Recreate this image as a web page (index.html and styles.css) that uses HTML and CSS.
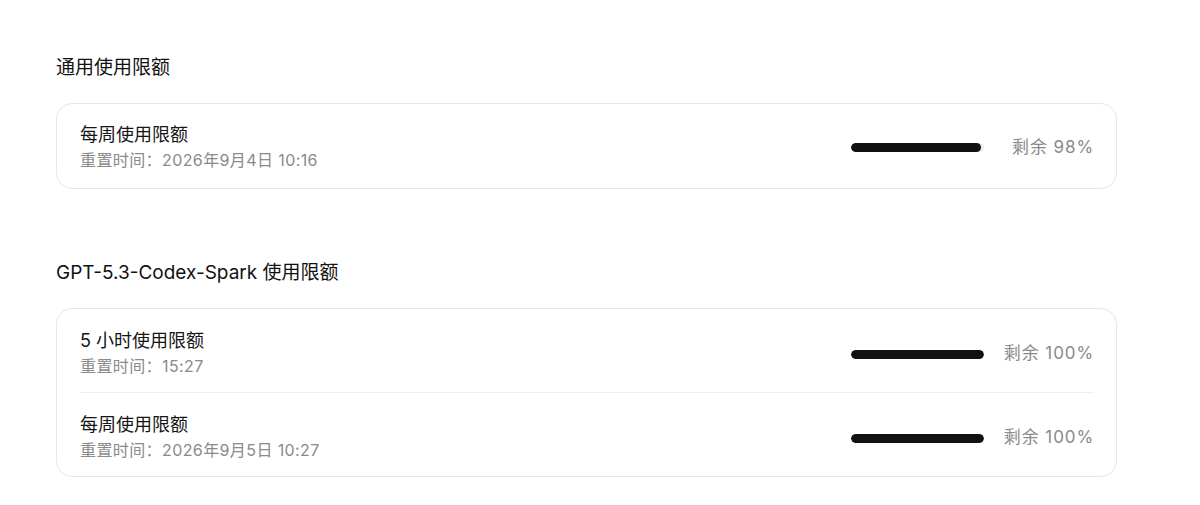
FILE: index.html
```html
<!DOCTYPE html>
<html lang="zh-CN">
<head>
<meta charset="utf-8">
<title>使用限额</title>
<link rel="stylesheet" href="styles.css">
</head>
<body>
<main class="page">
  <section class="section">
    <h2 class="section-title">通用使用限额</h2>
    <div class="card">
      <div class="row">
        <div class="info">
          <div class="name">每周使用限额</div>
          <div class="reset">重置时间：2026年9月4日 10:16</div>
        </div>
        <div class="usage">
          <div class="track"><div class="fill" style="width:98%"></div></div>
          <div class="remain">剩余 98%</div>
        </div>
      </div>
    </div>
  </section>
  <section class="section">
    <h2 class="section-title">GPT-5.3-Codex-Spark 使用限额</h2>
    <div class="card card--multi">
      <div class="row">
        <div class="info">
          <div class="name">5 小时使用限额</div>
          <div class="reset">重置时间：15:27</div>
        </div>
        <div class="usage">
          <div class="track"><div class="fill" style="width:100%"></div></div>
          <div class="remain">剩余 100%</div>
        </div>
      </div>
      <div class="row">
        <div class="info">
          <div class="name">每周使用限额</div>
          <div class="reset">重置时间：2026年9月5日 10:27</div>
        </div>
        <div class="usage">
          <div class="track"><div class="fill" style="width:100%"></div></div>
          <div class="remain">剩余 100%</div>
        </div>
      </div>
    </div>
  </section>
</main>
</body>
</html>
```

FILE: styles.css
```css
* { box-sizing: border-box; }
html, body { margin: 0; padding: 0; background: #ffffff; }
body {
  font-family: Inter, "Noto Sans CJK SC", sans-serif;
  color: #111111;
}
.page {
  width: 1061px;
  margin-left: 56px;
  padding-top: 54px;
  display: flex;
  flex-direction: column;
  gap: 70px;
}
.section-title {
  margin: 0 0 21px 0;
  font-size: 19px;
  line-height: 28px;
  font-weight: 400;
  color: #111111;
}
.card {
  border: 1px solid #e6e6e6;
  border-radius: 16px;
  padding: 0 22px 0 23px;
}
.row {
  display: flex;
  align-items: center;
  justify-content: space-between;
  padding: 18px 0 16px;
}
.card--multi .row { padding: 19px 0 14px; }
.row + .row { border-top: 1px solid #efefef; }
.info { display: flex; flex-direction: column; gap: 2px; }
.name { font-size: 18px; line-height: 25px; color: #151515; }
.reset { font-size: 16px; line-height: 23px; color: #8a8a8a; letter-spacing: 0.4px; }
.usage { display: flex; align-items: center; gap: 20px; }
.card--multi .usage { margin-top: 2px; }
.card--multi .remain { margin-top: -3px; }
.track {
  width: 133px;
  height: 9px;
  border-radius: 5px;
  background: #ececec;
  overflow: hidden;
}
.fill { height: 100%; background: #111111; border-radius: 5px; }
.remain {
  min-width: 90px;
  text-align: right;
  font-size: 17px;
  line-height: 24px;
  color: #8a8a8a;
  letter-spacing: 0.9px;
}
```
